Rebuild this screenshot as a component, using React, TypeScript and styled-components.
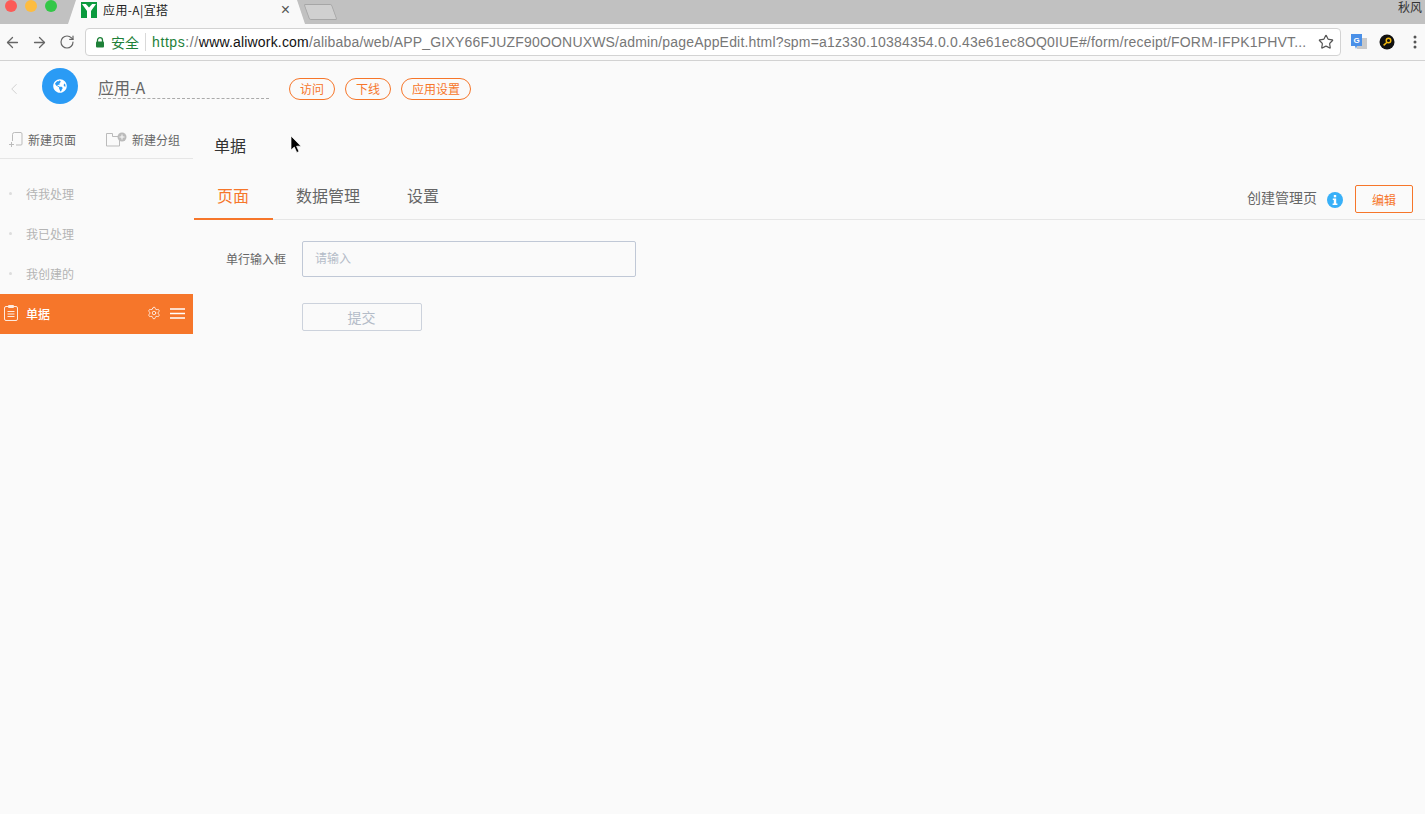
import * as React from 'react';
import styled, { createGlobalStyle } from 'styled-components';
import { ArrowLeft, ArrowRight, RotateCw, Star, ChevronLeft, Settings } from 'lucide-react';
import { FaGlobeAmericas } from 'react-icons/fa';

const CJK = `'Noto Sans CJK SC', 'Liberation Sans', sans-serif`;
const ORANGE = '#f6762a';

const GlobalStyle = createGlobalStyle`
  html, body {
    margin: 0;
    padding: 0;
    height: 100%;
    background: #fafafa;
    overflow: hidden;
    font-family: ${CJK};
  }
  * { box-sizing: border-box; }
`;

/**
 * browser
 */
const Page = styled.div`
  position: relative;
  width: 1425px;
  height: 814px;
  background: #fafafa;
`;

const TabStrip = styled.div`
  display: flex;
  align-items: flex-end;
  height: 24px;
  padding-left: 5px;
  background: #c1c1c1;
`;

const Lights = styled.div`
  display: flex;
  gap: 8px;
  align-self: flex-start;
  width: 63px;
`;

const Light = styled.span<{ $color: string }>`
  width: 12px;
  height: 12px;
  border-radius: 50%;
  background: ${p => p.$color};
`;

const BrowserTab = styled.div`
  display: flex;
  align-items: center;
  width: 237px;
  height: 24px;
  padding: 0 15px 4px 13px;
  background: #f9f9f9;
  clip-path: polygon(0 100%, 8px 0, 229px 0, 100% 100%);
`;

const TabLogo = styled.svg`
  width: 16px;
  height: 16px;
  margin-right: 6px;
`;

const TabTitle = styled.span`
  flex: 1;
  font-size: 12px;
  line-height: 20px;
  letter-spacing: 0.4px;
  color: #222;
`;

const TabClose = styled.span`
  font: 16px/16px 'Liberation Sans', sans-serif;
  color: #555;
`;

const NewTab = styled.div`
  width: 33px;
  height: 16px;
  margin: 0 0 4px -1px;
  background: #d0d0d0;
  border: 1px solid #a6a6a6;
  border-radius: 2px;
  transform: skewX(20deg) scaleX(0.85);
`;

const UserName = styled.span`
  margin: 0 3px auto auto;
  font-size: 12px;
  line-height: 14px;
  color: #333;
`;

const Toolbar = styled.div`
  display: flex;
  align-items: center;
  height: 37px;
  padding-left: 4px;
  background: #f9f9f9;
  border-bottom: 1px solid #d2d2d2;
  color: #666;
`;

const NavGroup = styled.div`
  display: flex;
  gap: 10px;
  align-items: center;
  width: 81px;
`;

const ReloadIcon = styled(RotateCw)`
  margin-left: 1px;
`;

const Omnibox = styled.div`
  display: flex;
  align-items: center;
  width: 1256px;
  height: 28px;
  padding: 0 6px 0 9px;
  background: #fff;
  border: 1px solid #d3d3d3;
  border-radius: 4px;
`;

const SecureLabel = styled.span`
  margin-left: 6px;
  padding-right: 6px;
  border-right: 1px solid #d9d9d9;
  font-size: 14px;
  line-height: 18px;
  color: #1e8038;
`;

const UrlText = styled.span`
  flex: 1;
  margin-left: 6px;
  font: 14px/18px 'Liberation Sans', sans-serif;
  letter-spacing: 0.18px;
  color: #777;
  white-space: nowrap;
  overflow: hidden;
`;

const UrlPrefix = styled.span`
  letter-spacing: 0.6px;
`;

const UrlScheme = styled.span`
  color: #1e8038;
`;

const UrlHost = styled.span`
  color: #111;
`;

const Extensions = styled.div`
  display: flex;
  align-items: center;
  margin-left: 10px;
`;

const ExtensionIcon = styled.svg`
  width: 16px;
  height: 16px;
  margin-right: 12px;
`;

const MenuDots = styled.svg`
  margin-left: 6px;
`;

/**
 * app header
 */
const AppHeader = styled.div`
  display: flex;
  align-items: center;
  height: 59px;
  padding: 0 0 10px 5px;
  color: #ccc;
`;

const BackChevron = styled(ChevronLeft)`
  margin-top: 6px;
`;

const AppLogo = styled.div`
  display: flex;
  align-items: center;
  justify-content: center;
  width: 36px;
  height: 36px;
  margin: 0 20px 0 19px;
  border-radius: 50%;
  background: #2a9bf5;
  color: #fff;
`;

const AppName = styled.div`
  width: 171px;
  height: 22px;
  margin: 5px 20px 0 0;
  border-bottom: 1px dashed #aaa;
  font-size: 16px;
  line-height: 20px;
  color: #666;
`;

const Pills = styled.div`
  display: flex;
  gap: 10px;
  margin-top: 7px;
`;

const Pill = styled.div`
  height: 22px;
  padding: 0 10px;
  border: 1px solid ${ORANGE};
  border-radius: 11px;
  font-size: 12px;
  line-height: 20px;
  color: ${ORANGE};
`;

/**
 * body
 */
const Body = styled.div`
  display: flex;
`;

const Sidebar = styled.div`
  flex: 0 0 193px;
`;

const SideTools = styled.div`
  display: flex;
  justify-content: space-between;
  align-items: center;
  height: 39px;
  padding: 1px 13px 0 9px;
  border-bottom: 1px solid #e6e6e6;
`;

const SideTool = styled.div`
  display: flex;
  align-items: center;
  font-size: 12px;
  line-height: 18px;
  color: #666;
`;

const ToolIcon = styled.svg`
  margin-right: 5px;
  color: #bbb;
`;

const SideList = styled.div`
  padding-top: 15px;
`;

const SideItem = styled.div`
  display: flex;
  align-items: center;
  height: 40px;
  padding: 0 0 2px 9px;
  font-size: 12px;
  color: #b4b4b4;
`;

const Dot = styled.span`
  width: 3px;
  height: 3px;
  margin-right: 14px;
  background: #ddd;
  border-radius: 50%;
`;

const ActiveItem = styled(SideItem)`
  padding: 0 8px 2px 3px;
  background: ${ORANGE};
  color: #fff;
  font-weight: 500;
`;

const ActiveLabel = styled.span`
  flex: 1;
  margin-left: 7px;
`;

const MenuBars = styled.svg`
  margin-left: 9px;
`;

const Main = styled.div`
  flex: 1;
  margin-left: 1px;
`;

const MainTitle = styled.div`
  height: 54px;
  padding: 13px 0 0 20px;
  font-size: 16px;
  line-height: 24px;
  color: #333;
`;

const TabBar = styled.div`
  display: flex;
  align-items: stretch;
  height: 46px;
  border-bottom: 1px solid #e6e6e6;
`;

const PageTab = styled.div<{ $active?: boolean }>`
  height: 46px;
  padding: 0 24px 0 23px;
  font-size: 16px;
  line-height: 43px;
  color: ${p => (p.$active ? ORANGE : '#666')};
  border-bottom: 2px solid ${p => (p.$active ? ORANGE : 'transparent')};
`;

const TabActions = styled.div`
  display: flex;
  align-items: center;
  margin-left: auto;
  padding: 4px 12px 0 0;
  font-size: 14px;
  color: #666;
`;

const ActionLabel = styled.span`
  margin-bottom: 4px;
`;

const InfoIcon = styled.svg`
  margin: 3px 12px 0 10px;
`;

const EditButton = styled.div`
  width: 58px;
  height: 28px;
  border: 1px solid ${ORANGE};
  border-radius: 2px;
  font-size: 12px;
  line-height: 28px;
  text-align: center;
  color: ${ORANGE};
`;

const Form = styled.div`
  padding: 21px 0 0 16px;
`;

const FormRow = styled.div`
  display: flex;
  align-items: center;
`;

const FieldLabel = styled.div`
  width: 76px;
  padding-bottom: 2px;
  text-align: right;
  font-size: 12px;
  color: #666;
`;

const Input = styled.div`
  width: 334px;
  height: 36px;
  margin-left: 16px;
  padding-left: 12px;
  border: 1px solid #c0c8d6;
  border-radius: 2px;
  font-size: 12px;
  line-height: 32px;
  color: #b4bcc8;
`;

const SubmitButton = styled.div`
  width: 120px;
  height: 28px;
  margin: 26px 0 0 92px;
  padding-right: 1px;
  border: 1px solid #ccd2dc;
  border-radius: 2px;
  font-size: 14px;
  line-height: 27px;
  text-align: center;
  color: #b4bcc8;
`;

const Cursor = styled.svg`
  position: absolute;
  left: 290px;
  top: 135px;
`;

const sideItems = ['待我处理', '我已处理', '我创建的'];

const App = () => (
  <Page>
    <GlobalStyle />
    <TabStrip>
      <Lights>
        <Light $color="#fc5b57" />
        <Light $color="#fdbc40" />
        <Light $color="#33c748" />
      </Lights>
      <BrowserTab>
        <TabLogo viewBox="0 0 16 16">
          <rect width="16" height="16" fill="#0b9a3e" />
          <path d="M1 2h6l1 3 1-3h6L10 9v7H6V9z" fill="#fff" />
          <path d="M4 1h8l-4 4.5z" fill="#0b9a3e" />
        </TabLogo>
        <TabTitle>应用-A|宜搭</TabTitle>
        <TabClose>×</TabClose>
      </BrowserTab>
      <NewTab />
      <UserName>秋风</UserName>
    </TabStrip>

    <Toolbar>
      <NavGroup>
        <ArrowLeft size={17} strokeWidth={1.8} />
        <ArrowRight size={17} strokeWidth={1.8} />
        <ReloadIcon size={16} strokeWidth={1.8} />
      </NavGroup>
      <Omnibox>
        <svg width="10" height="11" viewBox="0 0 10 11">
          <path d="M2.5 5V3.2a2.5 2.5 0 0 1 5 0V5" fill="none" stroke="#1e8038" strokeWidth="1.3" />
          <rect x="1" y="4.5" width="8" height="6" rx="1" fill="#1e8038" />
        </svg>
        <SecureLabel>安全</SecureLabel>
        <UrlText>
          <UrlPrefix>
            <UrlScheme>https</UrlScheme>://
          </UrlPrefix>
          <UrlHost>www.aliwork.com</UrlHost>
          /alibaba/web/APP_GIXY66FJUZF90OONUXWS/admin/pageAppEdit.html?spm=a1z330.10384354.0.0.43e61ec8OQ0IUE#/form/receipt/FORM-IFPK1PHVT...
        </UrlText>
        <Star size={16} strokeWidth={1.8} color="#555" />
      </Omnibox>
      <Extensions>
        <ExtensionIcon viewBox="0 0 16 16">
          <rect x="6" y="4" width="10" height="11" fill="#c9c9c9" />
          <path d="M0 0h11v12H6l-1 3-1-3H0z" fill="#4a90e8" />
          <text x="2.5" y="9" fontSize="8" fontFamily="Liberation Sans" fontWeight="700" fill="#fff">G</text>
        </ExtensionIcon>
        <ExtensionIcon viewBox="0 0 16 16">
          <circle cx="8" cy="8" r="7.5" fill="#111" />
          <circle cx="9.5" cy="6.5" r="2.3" fill="none" stroke="#f2b90f" strokeWidth="1.4" />
          <path d="M8 8.2 4.6 11.4" stroke="#f2b90f" strokeWidth="1.5" />
        </ExtensionIcon>
        <MenuDots width="4" height="14" viewBox="0 0 4 14">
          <circle cx="2" cy="2" r="1.5" fill="#555" />
          <circle cx="2" cy="7" r="1.5" fill="#555" />
          <circle cx="2" cy="12" r="1.5" fill="#555" />
        </MenuDots>
      </Extensions>
    </Toolbar>

    <AppHeader>
      <BackChevron size={18} strokeWidth={1.2} />
      <AppLogo>
        <FaGlobeAmericas size={14} />
      </AppLogo>
      <AppName>应用-A</AppName>
      <Pills>
        <Pill>访问</Pill>
        <Pill>下线</Pill>
        <Pill>应用设置</Pill>
      </Pills>
    </AppHeader>

    <Body>
      <Sidebar>
        <SideTools>
          <SideTool>
            <ToolIcon width="14" height="15" viewBox="0 0 14 15" fill="none" stroke="currentColor">
              <path d="M3.5 9V2.5a2 2 0 0 1 2-2h6.500a1.500 1.500 0 0 1 1 1.500V12a1 1 0 0 1-1 1H7" />
              <path d="M0 12.500h5M2.500 10v5" />
            </ToolIcon>
            新建页面
          </SideTool>
          <SideTool>
            <ToolIcon width="21" height="15" viewBox="0 0 21 15" fill="none" stroke="currentColor">
              <path d="M.5 14V1.500h6v3h7M.5 14h13V8" />
              <circle cx="16" cy="5" r="4.500" fill="currentColor" stroke="none" />
              <path d="M13.500 5h5M16 2.500v5" stroke="#fafafa" />
            </ToolIcon>
            新建分组
          </SideTool>
        </SideTools>
        <SideList>
          {sideItems.map(item => (
            <SideItem key={item}>
              <Dot />
              {item}
            </SideItem>
          ))}
          <ActiveItem>
            <svg width="16" height="18" viewBox="0 0 16 18" fill="none" stroke="#fff" opacity="0.85">
              <rect x="1.500" y="2.500" width="13" height="14" rx="1.500" />
              <path d="M5.500 1.500h5v2h-5zM4.500 7.500h7M4.500 10h7M4.500 12.500h7" />
            </svg>
            <ActiveLabel>单据</ActiveLabel>
            <Settings size={14} strokeWidth={1.3} color="#fff" />
            <MenuBars width="15" height="11" viewBox="0 0 15 11" stroke="#fff">
              <path d="M0 1h15M0 5.500h15M0 10h15" strokeWidth="1.300" />
            </MenuBars>
          </ActiveItem>
        </SideList>
      </Sidebar>

      <Main>
        <MainTitle>单据</MainTitle>
        <TabBar>
          <PageTab $active>页面</PageTab>
          <PageTab>数据管理</PageTab>
          <PageTab>设置</PageTab>
          <TabActions>
            <ActionLabel>创建管理页</ActionLabel>
            <InfoIcon width="16" height="16" viewBox="0 0 16 16">
              <circle cx="8" cy="8" r="8" fill="#38b0f8" />
              <rect x="6.800" y="3" width="2.400" height="2.300" fill="#fff" />
              <path d="M5.800 6.600h3.400v5h1.200V13H5.600v-1.400h1.200V8H5.800z" fill="#fff" />
            </InfoIcon>
            <EditButton>编辑</EditButton>
          </TabActions>
        </TabBar>
        <Form>
          <FormRow>
            <FieldLabel>单行输入框</FieldLabel>
            <Input>请输入</Input>
          </FormRow>
          <SubmitButton>提交</SubmitButton>
        </Form>
      </Main>
    </Body>

    <Cursor width="13" height="19" viewBox="0 0 13 19">
      <path d="M1 1v14l3.300-3 2.500 5.500 2.200-1-2.400-5.300H11z" fill="#000" stroke="#fff" strokeWidth="0.700" />
    </Cursor>
  </Page>
);

export default App;
